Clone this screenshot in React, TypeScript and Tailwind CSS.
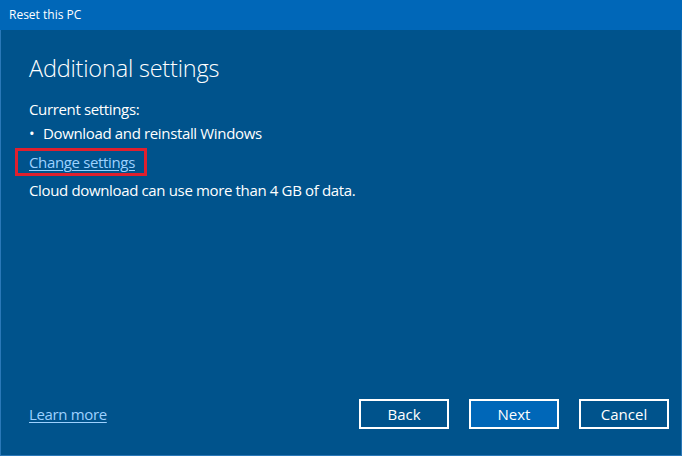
const FONT = "font-['Open_Sans','Noto_Sans',sans-serif]";

function DialogButton({ label, primary }: { label: string; primary?: boolean }) {
  return (
    <button
      className={
        'flex h-[30px] w-[90px] items-center justify-center border-2 border-white text-[15px] text-white ' +
        (primary ? 'bg-[#0067b8]' : 'bg-transparent')
      }
    >
      {label}
    </button>
  );
}

export default function App() {
  return (
    <div className={`flex h-[456px] w-[682px] flex-col bg-[#00538c] text-white ${FONT}`}>
      <div className="flex h-[30px] shrink-0 items-center bg-[#0067b8] px-[9px] text-[12px]">
        Reset this PC
      </div>

      <div className="flex flex-1 flex-col border-x border-b border-[#2a78b8] pl-[28px] pr-[12px]">
        <h1 className="mt-[22px] text-[23.5px] font-light leading-[32px] tracking-[-0.2px]">
          Additional settings
        </h1>

        <div className="mt-[13px] text-[15px] leading-[25px] tracking-[-0.35px]">
          <p>Current settings:</p>
          <p className="-mt-[1px] flex">
            <span className="w-[14px]">•</span>
            Download and reinstall Windows
          </p>
          <div className="my-[2px] -ml-[14px] w-fit border-[3px] border-[#e0202e] pl-[11px] pr-[9px] leading-[22px]">
            <a className="text-[#9dd1ff] underline underline-offset-2">Change settings</a>
          </div>
          <p>Cloud download can use more than 4 GB of data.</p>
        </div>

        <div className="mt-auto mb-[26px] flex items-center">
          <a className="text-[15px] tracking-[-0.35px] text-[#9dd1ff] underline underline-offset-2">
            Learn more
          </a>
          <div className="ml-auto flex gap-[20px]">
            <DialogButton label="Back" />
            <DialogButton label="Next" primary />
            <DialogButton label="Cancel" />
          </div>
        </div>
      </div>
    </div>
  );
}
